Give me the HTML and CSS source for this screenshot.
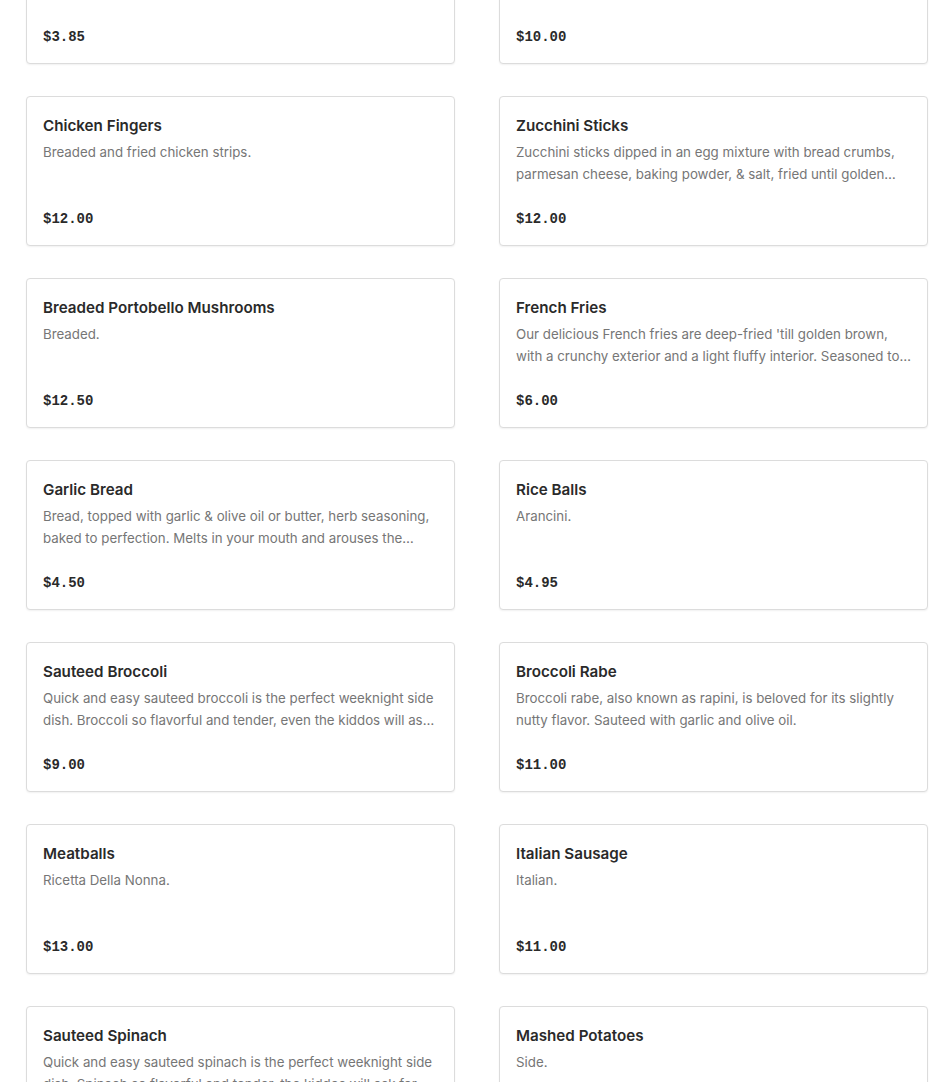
FILE: index.html
```html
<!DOCTYPE html>
<html lang="en">
<head>
<meta charset="utf-8">
<title>Menu</title>
<link rel="stylesheet" href="styles.css">
</head>
<body>
<main class="menu">
  <article class="card">
    <h3 class="title">Side Salad</h3>
    <p class="desc">Fresh greens.</p>
    <div class="price">$3.85</div>
  </article>
  <article class="card">
    <h3 class="title">Mozzarella Sticks</h3>
    <p class="desc">Mozzarella cheese sticks breaded with Italian seasoning and fried until golden brown, served with a side of marinara sauce for dipping.</p>
    <div class="price">$10.00</div>
  </article>

  <article class="card">
    <h3 class="title">Chicken Fingers</h3>
    <p class="desc">Breaded and fried chicken strips.</p>
    <div class="price">$12.00</div>
  </article>
  <article class="card">
    <h3 class="title">Zucchini Sticks</h3>
    <p class="desc">Zucchini sticks dipped in an egg mixture with bread crumbs, parmesan cheese, baking powder, &amp; salt, fried until golden brown and served with marinara.</p>
    <div class="price">$12.00</div>
  </article>

  <article class="card">
    <h3 class="title">Breaded Portobello Mushrooms</h3>
    <p class="desc">Breaded.</p>
    <div class="price">$12.50</div>
  </article>
  <article class="card">
    <h3 class="title">French Fries</h3>
    <p class="desc">Our delicious French fries are deep-fried 'till golden brown, with a crunchy exterior and a light fluffy interior. Seasoned to perfection.</p>
    <div class="price">$6.00</div>
  </article>

  <article class="card">
    <h3 class="title">Garlic Bread</h3>
    <p class="desc">Bread, topped with garlic &amp; olive oil or butter, herb seasoning, baked to perfection. Melts in your mouth and arouses the senses.</p>
    <div class="price">$4.50</div>
  </article>
  <article class="card">
    <h3 class="title">Rice Balls</h3>
    <p class="desc">Arancini.</p>
    <div class="price">$4.95</div>
  </article>

  <article class="card">
    <h3 class="title">Sauteed Broccoli</h3>
    <p class="desc">Quick and easy sauteed broccoli is the perfect weeknight side dish. Broccoli so flavorful and tender, even the kiddos will ask for seconds.</p>
    <div class="price">$9.00</div>
  </article>
  <article class="card">
    <h3 class="title">Broccoli Rabe</h3>
    <p class="desc">Broccoli rabe, also known as rapini, is beloved for its slightly nutty flavor. Sauteed with garlic and olive oil.</p>
    <div class="price">$11.00</div>
  </article>

  <article class="card">
    <h3 class="title">Meatballs</h3>
    <p class="desc">Ricetta Della Nonna.</p>
    <div class="price">$13.00</div>
  </article>
  <article class="card">
    <h3 class="title">Italian Sausage</h3>
    <p class="desc">Italian.</p>
    <div class="price">$11.00</div>
  </article>

  <article class="card">
    <h3 class="title">Sauteed Spinach</h3>
    <p class="desc">Quick and easy sauteed spinach is the perfect weeknight side dish. Spinach so flavorful and tender, the kiddos will ask for seconds.</p>
    <div class="price">$11.00</div>
  </article>
  <article class="card">
    <h3 class="title">Mashed Potatoes</h3>
    <p class="desc">Side.</p>
    <div class="price">$7.00</div>
  </article>
</main>
</body>
</html>
```
FILE: styles.css
```css
html, body {
  margin: 0;
  padding: 0;
  background: #ffffff;
  overflow: hidden;
}

body {
  font-family: "Inter", "Liberation Sans", sans-serif;
  color: #2b2b2b;
}

.menu {
  display: grid;
  grid-template-columns: 429px 429px;
  column-gap: 44px;
  row-gap: 32px;
  padding: 0 0 0 26px;
  margin-top: -86px;
}

.card {
  box-sizing: border-box;
  height: 150px;
  border: 1px solid #dcdcdc;
  border-radius: 4px;
  box-shadow: 0 1px 2px rgba(0, 0, 0, 0.06);
  padding: 17px 16px 16px 16px;
  display: flex;
  flex-direction: column;
  background: #fff;
}

.title {
  margin: 0;
  font-size: 15.2px;
  line-height: 24px;
  font-weight: 600;
  color: #2a2a2a;
  white-space: nowrap;
  overflow: hidden;
  text-overflow: ellipsis;
}

.desc {
  margin: 3px 0 0 0;
  height: 44px;
  font-size: 13.3px;
  line-height: 22px;
  color: #767676;
  display: -webkit-box;
  -webkit-line-clamp: 2;
  -webkit-box-orient: vertical;
  overflow: hidden;
}

.price {
  margin-top: 24px;
  font-family: "Liberation Mono", "DejaVu Sans Mono", monospace;
  font-weight: 700;
  font-size: 14px;
  line-height: 20px;
  color: #2a2a2a;
}
```
